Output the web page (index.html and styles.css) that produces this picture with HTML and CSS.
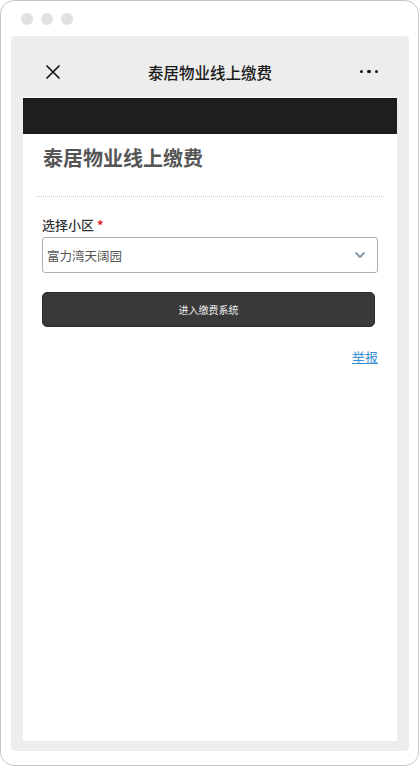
FILE: index.html
```html
<!DOCTYPE html>
<html lang="zh-CN">
<head>
<meta charset="utf-8">
<title>泰居物业线上缴费</title>
<link rel="stylesheet" href="styles.css">
</head>
<body>
<div class="frame">
  <div class="dots"><span></span><span></span><span></span></div>
  <div class="panel">
    <div class="nav">
      <svg class="close" width="16" height="16" viewBox="0 0 16 16"><path d="M1.5 1.5L14.5 14.5M14.5 1.5L1.5 14.5" stroke="#111" stroke-width="1.6" fill="none"/></svg>
      <div class="nav-title">泰居物业线上缴费</div>
      <div class="more"><i></i><i></i><i></i></div>
    </div>
    <div class="content">
      <div class="banner"></div>
      <div class="body">
        <h1 class="title">泰居物业线上缴费</h1>
        <div class="divider"></div>
        <div class="form">
          <div class="label">选择小区 <span class="req">*</span></div>
          <div class="select">
            <span class="select-text">富力湾天阔园</span>
            <svg class="chev" width="12" height="8" viewBox="0 0 12 8"><path d="M1.5 1.5L6 6L10.5 1.5" stroke="#8797aa" stroke-width="2" fill="none"/></svg>
          </div>
          <div class="btn">进入缴费系统</div>
          <div class="report"><a href="#">举报</a></div>
        </div>
      </div>
    </div>
  </div>
</div>
</body>
</html>
```
FILE: styles.css
```css
* { box-sizing: border-box; }
html, body { margin: 0; padding: 0; background: #fff; }
body { font-family: "Noto Sans CJK SC", "Noto Sans", sans-serif; }

.frame {
  width: 419px;
  height: 766px;
  border: 1px solid #c6c6c6;
  border-radius: 14px;
  padding: 0 9px 14px 10px;
  display: flex;
  flex-direction: column;
  background: #fff;
}
.dots {
  height: 35px;
  display: flex;
  align-items: center;
  gap: 8px;
  padding-left: 10px;
}
.dots span {
  width: 12px;
  height: 12px;
  border-radius: 50%;
  background: #e1e1e1;
}
.panel {
  flex: 1;
  background: #ededed;
  border-radius: 4px;
  padding: 0 12px 10px 12px;
  display: flex;
  flex-direction: column;
}
.nav {
  height: 61px;
  display: flex;
  align-items: center;
  justify-content: space-between;
  padding: 10px 19px 0 22px;
  position: relative;
}
.close { display: block; }
.nav-title {
  font-size: 15.5px;
  font-weight: 500;
  color: #1a1a1a;
  position: absolute;
  left: 0;
  right: 0;
  top: 10px;
  bottom: 0;
  display: flex;
  align-items: center;
  justify-content: center;
}
.more { display: flex; gap: 4px; }
.more i {
  display: block;
  width: 3.5px;
  height: 3.5px;
  border-radius: 50%;
  background: #111;
}
.content {
  flex: 1;
  background: #fff;
  padding-top: 1px;
}
.banner {
  height: 36px;
  background: #1e1e1e;
  border-top: 1px solid #111;
}
.body { padding: 10px 13px 0 14px; }
.title {
  margin: 0;
  padding-left: 6px;
  font-size: 20px;
  line-height: 28px;
  font-weight: 700;
  color: #555;
}
.divider {
  margin-top: 24px;
  border-top: 1px dotted #c8c8c8;
}
.form { padding: 19px 6px 0 5px; }
.label {
  font-size: 13px;
  line-height: 18px;
  color: #333;
  font-weight: 500;
}
.req { color: #e02020; font-weight: 700; }
.select {
  margin-top: 3px;
  height: 36px;
  border: 1px solid #b0b0b0;
  border-radius: 3px;
  display: flex;
  align-items: center;
  justify-content: space-between;
  padding: 0 11px 0 4px;
}
.select-text { font-size: 12.5px; color: #555; }
.chev { display: block; }
.btn {
  margin-top: 19px;
  margin-right: 3px;
  height: 35px;
  background: #393939;
  border: 1px solid #2a2a2a;
  border-radius: 5px;
  color: #f0f0f0;
  font-size: 10px;
  display: flex;
  align-items: center;
  justify-content: center;
}
.report {
  margin-top: 19px;
  text-align: right;
  font-size: 13px;
  line-height: 22px;
}
.report a { color: #3a8fd6; text-decoration: underline; }
```
